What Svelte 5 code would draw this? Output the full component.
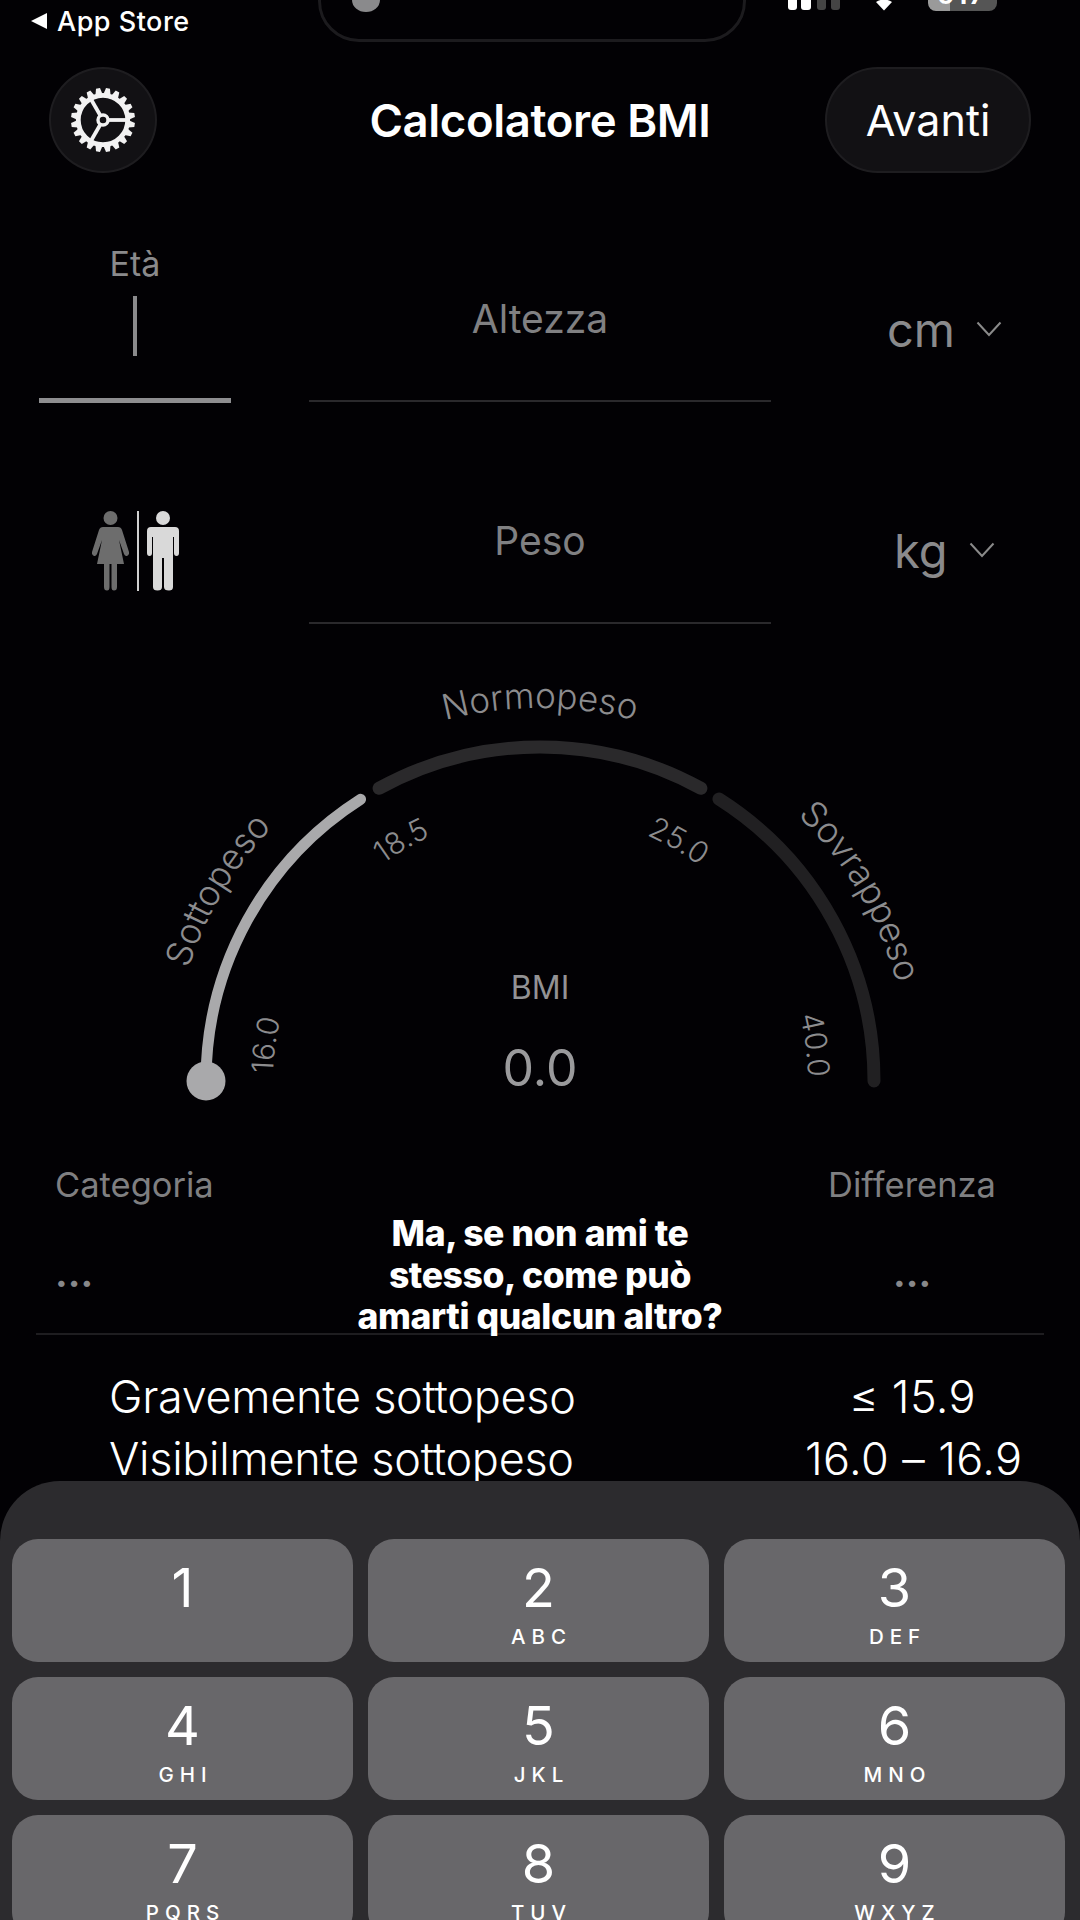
<script>
  const keys = [
    ['1', ''], ['2', 'ABC'], ['3', 'DEF'],
    ['4', 'GHI'], ['5', 'JKL'], ['6', 'MNO'],
    ['7', 'PQRS'], ['8', 'TUV'], ['9', 'WXYZ']
  ];
  const cx = 540, cy = 401;
  function arc(r, a0, a1) {
    const p = (a) => {
      const t = (a * Math.PI) / 180;
      return `${(cx - r * Math.cos(t)).toFixed(2)} ${(cy - r * Math.sin(t)).toFixed(2)}`;
    };
    return `M${p(a0)} A${r} ${r} 0 0 1 ${p(a1)}`;
  }
  const labels = [
    { id: 'l1', r: 369, a0: 0, a1: 60, pos: 51, text: 'Sottopeso', size: 35.5 },
    { id: 'l2', r: 373, a0: 60, a1: 120, pos: 50, text: 'Normopeso', size: 35 },
    { id: 'l3', r: 370, a0: 120, a1: 180, pos: 49, text: 'Sovrappeso', size: 35.5 },
    { id: 'n1', r: 267, a0: -12.5, a1: 27.5, pos: 50, text: '16.0', size: 30 },
    { id: 'n2', r: 268, a0: 40, a1: 80, pos: 50, text: '18.5', size: 30 },
    { id: 'n3', r: 268, a0: 100, a1: 140, pos: 50, text: '25.0', size: 30 },
    { id: 'n4', r: 268, a0: 152.5, a1: 192.5, pos: 50, text: '40.0', size: 30 }
  ];
</script>

<div class="screen">
  <div class="status">
    <div class="back"><span class="tri"></span>App Store</div>
    <div class="island"><span class="cam"></span></div>
    <div class="sys">
      <svg width="52" height="11" viewBox="0 0 52 11"><rect x="0" y="-4" width="9" height="14" rx="3" fill="#fff"/><rect x="13" y="-4" width="10" height="14" rx="3" fill="#fff"/><rect x="29" y="-4" width="9" height="14" rx="3" fill="#444"/><rect x="43" y="-4" width="9" height="14" rx="3" fill="#444"/></svg>
      <svg class="wifi" width="16" height="11" viewBox="0 0 16 11"><path d="M0 2 Q8 -3 16 2 L8 10.500 Z" fill="#fff"/></svg>
      <div class="batt"><span>617</span></div>
    </div>
  </div>

  <header class="top">
    <button class="gear" aria-label="Impostazioni">
      <svg width="66" height="66" viewBox="0 0 66 66">
        <g fill="#f2f2f2">
          {#each Array(20) as _, i}
            <path d="M29.500 7 L31 1 H35 L36.500 7 Z" transform="rotate({i * 18 + 9} 33 33)"/>
          {/each}
        </g>
        <circle cx="33" cy="33" r="24.7" fill="none" stroke="#f2f2f2" stroke-width="4.8"/>
        <g stroke="#f2f2f2" stroke-width="3.8">
          <path d="M38 33 H56"/>
          <path d="M30.500 28.700 L21 12.300"/>
          <path d="M30.500 37.300 L21 53.700"/>
        </g>
        <circle cx="33" cy="33" r="5" fill="none" stroke="#f2f2f2" stroke-width="3.4"/>
      </svg>
    </button>
    <h1>Calcolatore BMI</h1>
    <button class="next">Avanti</button>
  </header>

  <section class="fields">
    <div class="col-age">
      <div class="age-label">Età</div>
      <div class="cursor"></div>
      <div class="age-line"></div>
    </div>
    <div class="field">Altezza</div>
    <div class="unit">cm<svg width="26" height="16" viewBox="0 0 26 16"><path d="M1.5 1.5 L13 14 L24.5 1.5" fill="none" stroke="#8a8a8a" stroke-width="2"/></svg></div>

    <div class="genders">
      <svg width="37" height="80" viewBox="0 0 37 80">
        <circle cx="18.500" cy="7" r="7" fill="#6d6d6d"/>
        <path d="M11 16 H26 Q29 16 30 19 L37 41 Q37.500 44 35 45 Q33 45.500 32 43 L27 29 L32 53 H25 V76 Q25 79.500 22 79.500 Q19.500 79.500 19.500 76 V53 H17.500 V76 Q17.500 79.500 15 79.500 Q12 79.500 12 76 V53 H5 L10 29 L5 43 Q4 45.500 2 45 Q-.5 44 0 41 L7 19 Q8 16 11 16 Z" fill="#6d6d6d"/>
      </svg>
      <span class="gsep"></span>
      <svg width="32" height="80" viewBox="0 0 32 80">
        <circle cx="16" cy="7" r="7" fill="#d9d9d9"/>
        <path d="M4 16 H28 Q32 16 32 20 V42 Q32 45 29.500 45 Q27 45 27 42 V26 H26 V76 Q26 79.500 22 79.500 Q17 79.500 17 76 V47 H15 V76 Q15 79.500 10.500 79.500 Q6 79.500 6 76 V26 H5 V42 Q5 45 2.500 45 Q0 45 0 42 V20 Q0 16 4 16 Z" fill="#d9d9d9"/>
      </svg>
    </div>
    <div class="field peso">Peso</div>
    <div class="unit kg">kg<svg width="26" height="16" viewBox="0 0 26 16"><path d="M1.5 1.5 L13 14 L24.5 1.5" fill="none" stroke="#8a8a8a" stroke-width="2"/></svg></div>
  </section>

  <div class="gauge">
    <svg width="1080" height="460" viewBox="0 0 1080 460">
      <defs>
        {#each labels as l}
          <path id={l.id} d={arc(l.r, l.a0, l.a1)} />
        {/each}
      </defs>
      <path d={arc(334, 0, 57.5)} fill="none" stroke="#a9a9ab" stroke-width="11" stroke-linecap="round"/>
      <path d={arc(334, 61.2, 118.8)} fill="none" stroke="#2a292b" stroke-width="13" stroke-linecap="round"/>
      <path d={arc(334, 122.4, 180)} fill="none" stroke="#212022" stroke-width="13" stroke-linecap="round"/>
      <circle cx="206" cy="401" r="19.500" fill="#a9a9ab"/>
      {#each labels as l}
        <text font-size={l.size} fill="#8c8c8e" text-anchor="middle" class="curved">
          <textPath href={'#' + l.id} startOffset={l.pos + '%'}>{l.text}</textPath>
        </text>
      {/each}
    </svg>
    <div class="bmi">
      <div class="bmi-label">BMI</div>
      <div class="bmi-value">0.0</div>
    </div>
  </div>

  <section class="result">
    <div class="rcol">
      <div class="rlabel">Categoria</div>
      <div class="dots">...</div>
    </div>
    <p class="quote">Ma, se non ami te<br>stesso, come può<br>amarti qualcun altro?</p>
    <div class="rcol right">
      <div class="rlabel">Differenza</div>
      <div class="dots">...</div>
    </div>
  </section>

  <section class="table">
    <div class="row"><span>Gravemente sottopeso</span><span class="val">≤ 15.9</span></div>
    <div class="row"><span>Visibilmente sottopeso</span><span class="val">16.0 – 16.9</span></div>
  </section>

  <div class="keyboard">
    {#each keys as k}
      <div class="key">
        <span class="digit">{k[0]}</span>
        <span class="letters">{k[1]}</span>
      </div>
    {/each}
  </div>
</div>

<style>
  :global(body) { background: #000; }
  .screen {
    position: relative;
    width: 1080px;
    height: 1920px;
    overflow: hidden;
    background: #020104;
    color: #fff;
    font-family: Inter, "Liberation Sans", sans-serif;
  }
  .status {
    position: relative;
    height: 67px;
    display: flex;
    align-items: flex-start;
    justify-content: space-between;
  }
  .back {
    display: flex;
    align-items: center;
    gap: 10px;
    margin: 6px 0 0 31px;
    font-size: 27px;
    font-weight: 500;
    height: 30px;
    letter-spacing: 0.5px;
  }
  .tri {
    width: 0;
    height: 0;
    border-top: 8px solid transparent;
    border-bottom: 8px solid transparent;
    border-right: 16px solid #fff;
  }
  .island {
    position: absolute;
    left: 318px;
    top: -40px;
    width: 428px;
    height: 82px;
    box-sizing: border-box;
    border: 3px solid #1c1b1e;
    border-radius: 42px;
  }
  .cam {
    position: absolute;
    left: 31px;
    top: 25px;
    width: 28px;
    height: 24px;
    border-radius: 50%;
    background: #8a8a8c;
  }
  .sys {
    display: flex;
    align-items: flex-start;
    gap: 36px;
    margin-right: 83px;
  }
  .batt {
    width: 69px;
    height: 11px;
    border-radius: 0 0 8px 8px;
    background: linear-gradient(90deg, #9a9a9a 32%, #555 32%);
    overflow: hidden;
    position: relative;
  }
  .batt span {
    position: absolute;
    left: 9px;
    top: -20px;
    font-size: 26px;
    line-height: 30px;
    font-weight: 700;
    letter-spacing: 2px;
    color: #fff;
  }
  .top {
    height: 106px;
    display: flex;
    align-items: center;
    justify-content: space-between;
    padding: 0 49px;
    position: relative;
  }
  .gear {
    width: 108px;
    height: 106px;
    padding: 0;
    border-radius: 50%;
    background: #121114;
    border: 2px solid #1e1d20;
    display: flex;
    align-items: center;
    justify-content: center;
  }
  h1 {
    margin: 0;
    font-size: 45.5px;
    font-weight: 600;
    letter-spacing: -0.4px;
    position: absolute;
    left: 0;
    right: 0;
    text-align: center;
  }
  .next {
    width: 206px;
    height: 106px;
    border-radius: 53px;
    background: #121114;
    border: 2px solid #1e1d20;
    color: #fff;
    font-family: inherit;
    font-size: 43px;
    font-weight: 400;
    position: relative;
  }
  .fields {
    display: grid;
    grid-template-columns: 192px 462px 1fr;
    grid-template-rows: 154px 222px;
    column-gap: 78px;
    padding: 75px 0 0 39px;
    color: #8a8a8c;
  }
  .col-age {
    display: flex;
    flex-direction: column;
    align-items: center;
    height: 155px;
  }
  .age-label { font-size: 34px; height: 32px; line-height: 32px; }
  .cursor { width: 4px; height: 60px; margin-top: 16px; background: #8a8a8c; }
  .age-line { width: 192px; height: 5px; margin-top: auto; background: #8e8e90; }
  .field {
    height: 154px;
    box-sizing: border-box;
    border-bottom: 2px solid #2a292c;
    font-size: 39px;
    text-align: center;
    line-height: 142px;
    color: #808082;
  }
  .field.peso {
    grid-row: 2;
    grid-column: 2;
    height: 222px;
    line-height: 278px;
  }
  .unit {
    display: flex;
    align-items: center;
    gap: 21px;
    height: 154px;
    padding-top: 8px;
    box-sizing: border-box;
    font-size: 47px;
    font-weight: 400;
    margin-left: 38px;
  }
  .unit.kg { grid-row: 2; grid-column: 3; height: 222px; padding-top: 74px; margin-left: 45px; }
  .genders {
    grid-row: 2;
    grid-column: 1;
    display: flex;
    align-items: center;
    justify-content: center;
    gap: 8px;
    height: 222px;
    box-sizing: border-box;
    padding-top: 76px;
  }
  .gsep { width: 2px; height: 80px; background: #d0d0d0; }
  .gauge { position: relative; height: 460px; margin-top: 56px; }
  .gauge svg { display: block; }
  .curved { font-family: Inter, "Liberation Sans", sans-serif; font-weight: 300; }
  .bmi {
    position: absolute;
    left: 0;
    right: 0;
    top: 286px;
    text-align: center;
    color: #929294;
  }
  .bmi-label { font-size: 32px; line-height: 44px; }
  .bmi-value { font-size: 50px; line-height: 60px; margin-top: 28px; color: #9a9a9c; }
  .result {
    position: relative;
    display: flex;
    justify-content: space-between;
    margin: 0 36px;
    height: 195px;
    box-sizing: border-box;
    border-bottom: 2px solid #1e1d20;
    padding: 23px 19px 0;
  }
  .rcol { display: flex; flex-direction: column; color: #7f7f81; }
  .rcol.right { align-items: center; margin-right: 29px; }
  .rlabel { font-size: 34.5px; line-height: 44px; }
  .dots { font-size: 38px; font-weight: 700; line-height: 44px; margin-top: 44px; color: #88888a; }
  .quote {
    position: absolute;
    left: 0;
    right: 0;
    top: 73px;
    margin: 0;
    text-align: center;
    font-size: 35.5px;
    line-height: 41.5px;
    font-weight: 800;
    letter-spacing: -0.4px;
  }
  .table { padding: 31px 60px 0 109px; }
  .row {
    display: flex;
    justify-content: space-between;
    font-size: 45px;
    font-weight: 300;
    line-height: 62px;
    letter-spacing: -0.3px;
    color: #fff;
  }
  .val { width: 215px; text-align: center; white-space: nowrap; letter-spacing: 0.4px; }
  .keyboard {
    position: absolute;
    left: 0;
    right: 0;
    top: 1481px;
    bottom: 0;
    box-sizing: border-box;
    padding: 58px 15px 0 12px;
    background: #2c2b2e;
    border-radius: 60px 60px 0 0;
    display: grid;
    grid-template-columns: repeat(3, 1fr);
    grid-auto-rows: 123px;
    gap: 15px;
  }
  .key {
    background: #68676a;
    border-radius: 26px;
    display: flex;
    flex-direction: column;
    align-items: center;
    color: #fff;
  }
  .digit { font-size: 54px; line-height: 60px; margin-top: 19px; }
  .letters { font-size: 20.5px; line-height: 24px; letter-spacing: 6px; margin-left: 6px; margin-top: 7px; font-weight: 500; }
</style>
